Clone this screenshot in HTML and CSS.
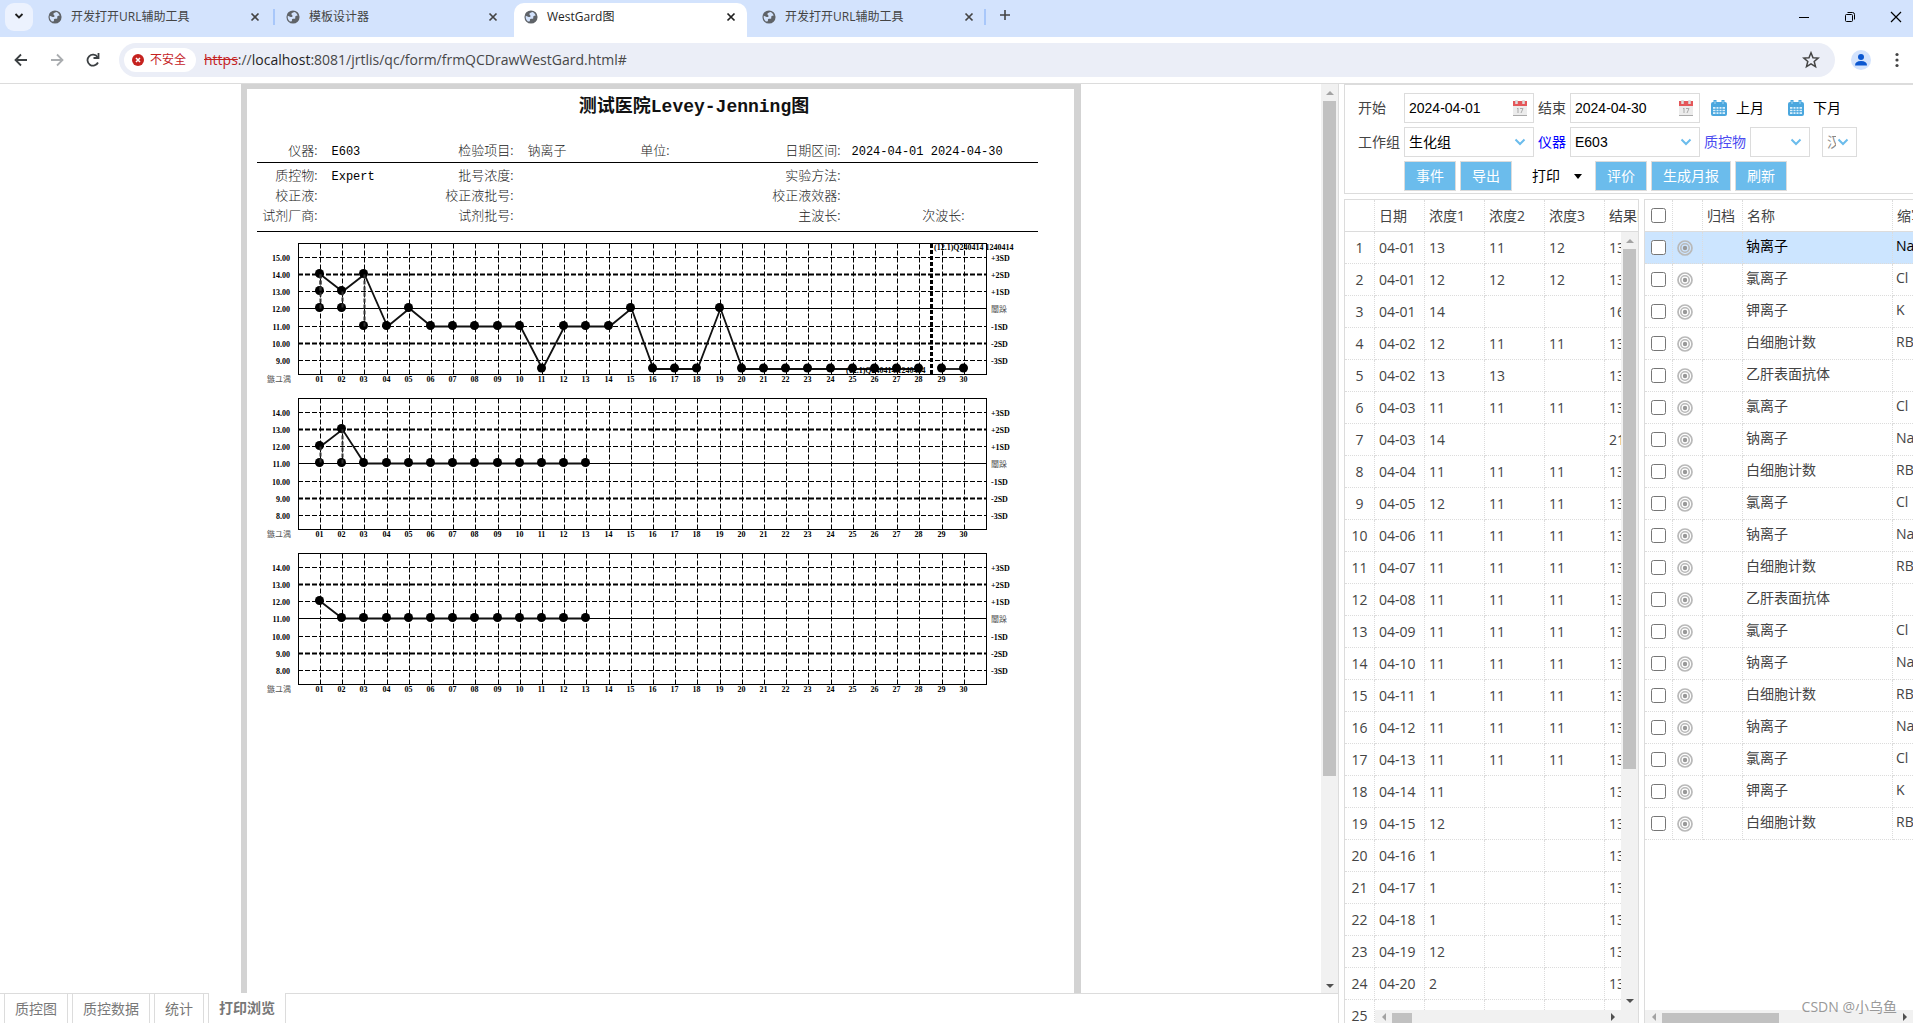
FILE: index.html
```html
<!DOCTYPE html>
<html lang="zh-CN">
<head>
<meta charset="utf-8">
<title>WestGard图</title>
<link rel="stylesheet" href="styles.css">
</head>
<body>
<svg class="defs" aria-hidden="true">
  <symbol id="globe" viewBox="0 0 16 16"><circle cx="8" cy="8" r="7.500" fill="#5f6368"/><path d="M9.500 2.200c-2 .6-3.600 1.300-3.300 2.700.2 1 1.300 1 1.300 2s-1 1.300-2.200 1.100L2 6.500C1.600 9 2.500 11.500 4.500 13l2.300-.2c.1-1.500-.4-2 .6-2.500s2.600.2 3.100-.7c.5-1-.4-1.700.4-2.500s1.500-.6 2.300-.5C13 4.500 11.500 2.800 9.500 2.200z" fill="#d3e3fd"/></symbol>
  <symbol id="cross" viewBox="0 0 10 10"><path d="M1.500 1.500l7 7M8.500 1.500l-7 7" stroke="currentColor" stroke-width="1.700" fill="none"/></symbol>
  <symbol id="bluecal" viewBox="0 0 16 16"><path d="M0 4q0-2 2-2h12q2 0 2 2v10q0 2-2 2H2q-2 0-2-2z" fill="#4ba7de"/><path d="M2 7h12v7H2z" fill="#d9effb"/><path d="M5 7v7M8 7v7M11 7v7M2 9.300h12M2 11.700h12" stroke="#4ba7de"/><path d="M4 0v4M12 0v4" stroke="#4ba7de" stroke-width="3"/><path d="M4 1v3M12 1v3" stroke="#a5d6f3"/></symbol>
  <symbol id="redcal" viewBox="0 0 16 16"><path d="M1 1h14v5H1z" fill="#e4575a"/><path d="M1 6h14v9H1z" fill="#ececec"/><path d="M1 15.500h14" stroke="#aaa"/><path d="M4.500 0v4M11.500 0v4" stroke="#ddd" stroke-width="2.500"/><path d="M6 8v5M5 9l1-1M8 8.500h3l-2 4.500" stroke="#aaa" fill="none"/></symbol>
  <symbol id="target" viewBox="0 0 16 16"><g fill="none" stroke="#b9b9b9"><circle cx="8" cy="8" r="7" stroke-width="1.700"/><circle cx="8" cy="8" r="4.200" stroke-width="1.600"/></g><circle cx="8" cy="8" r="2.200" fill="#999"/></symbol>
</svg>

<header class="browser">
  <nav class="tabstrip" id="tabstrip">
    <button class="tabsearch" aria-label="搜索标签页"><svg width="10" height="10" viewBox="0 0 10 10"><path d="M1.500 3l3.500 3.500L8.500 3" fill="none" stroke="#1f1f1f" stroke-width="1.800"/></svg></button>
    <div class="tab"><svg class="fav"><use href="#globe"/></svg><span>开发打开URL辅助工具</span><button aria-label="关闭"><svg><use href="#cross"/></svg></button></div>
    <div class="tab sep"><svg class="fav"><use href="#globe"/></svg><span>模板设计器</span><button aria-label="关闭"><svg><use href="#cross"/></svg></button></div>
    <div class="tab active"><svg class="fav"><use href="#globe"/></svg><span>WestGard图</span><button aria-label="关闭"><svg><use href="#cross"/></svg></button></div>
    <div class="tab"><svg class="fav"><use href="#globe"/></svg><span>开发打开URL辅助工具</span><button aria-label="关闭"><svg><use href="#cross"/></svg></button></div>
    <button class="newtab" aria-label="新标签页"><svg width="12" height="12"><path d="M6 1v10M1 6h10" stroke="#444" stroke-width="1.600"/></svg></button>
    <div class="wincontrols">
      <button aria-label="最小化"><svg width="12" height="12"><path d="M1 6.500h10" stroke="#000"/></svg></button>
      <button aria-label="还原"><svg width="12" height="12" fill="none" stroke="#000"><rect x="1.500" y="3.500" width="7" height="7" rx="1"/><path d="M3.500 1.500h5q2 0 2 2v5"/></svg></button>
      <button aria-label="关闭窗口"><svg width="12" height="12"><path d="M1 1l10 10M11 1L1 11" stroke="#000" stroke-width="1.200"/></svg></button>
    </div>
  </nav>
  <div class="toolbar">
    <button class="nav" aria-label="后退"><svg width="14" height="14" fill="none" stroke="#3c4043" stroke-width="1.800"><path d="M13 7H2M7 1.500L1.500 7 7 12.500"/></svg></button>
    <button class="nav" aria-label="前进"><svg width="14" height="14" fill="none" stroke="#aaadb0" stroke-width="1.800"><path d="M1 7h11M7 1.500L12.500 7 7 12.500"/></svg></button>
    <button class="nav" aria-label="刷新页面"><svg width="14" height="14" fill="none" stroke="#3c4043" stroke-width="1.800"><path d="M12 9.500A5.500 5.500 0 1 1 11.500 4"/><path d="M12.500 0v5h-5" /></svg></button>
    <div class="omnibox">
      <span class="chip"><svg width="12" height="12"><circle cx="6" cy="6" r="6" fill="#c5221f"/><path d="M4 4l4 4M8 4L4 8" stroke="#fff" stroke-width="1.500"/></svg>不安全</span>
      <span class="url"><s>https</s>://<b>localhost</b>:8081/jrtlis/qc/form/frmQCDrawWestGard.html#</span>
      <button class="star" aria-label="收藏"><svg width="18" height="18" viewBox="0 0 18 18"><path d="M9 1.800l2 4.900 5.200.4-4 3.400 1.300 5.100L9 12.800l-4.500 2.800 1.300-5.100-4-3.400 5.200-.4z" fill="none" stroke="#444" stroke-width="1.500"/></svg></button>
    </div>
    <button class="avatar" aria-label="个人资料"><svg width="20" height="20"><circle cx="10" cy="10" r="10" fill="#d3e3fd"/><circle cx="10" cy="7" r="3" fill="#0b57d0"/><path d="M4 15.500q0-4.500 6-4.500t6 4.500z" fill="#0b57d0"/></svg></button>
    <button class="dots" aria-label="菜单"><svg width="4" height="16" fill="#444"><circle cx="2" cy="2.500" r="1.600"/><circle cx="2" cy="8" r="1.600"/><circle cx="2" cy="13.500" r="1.600"/></svg></button>
  </div>
</header>

<main class="app">
  <section class="left">
    <div class="viewer">
      <div class="stage">
        <article class="paper">
          <h1>测试医院Levey-Jenning图</h1>
          <div class="fields first">
            <span>仪器:</span><i>E603</i><span>检验项目:</span><i class="name">钠离子</i><span>单位:</span><i></i><span>日期区间:</span><i class="wide">2024-04-01 2024-04-30</i>
          </div>
          <div class="fields rest">
            <span>质控物:</span><i>Expert</i><span>批号浓度:</span><i></i><span></span><i></i><span>实验方法:</span><i></i><span></span>
            <span>校正液:</span><i></i><span>校正液批号:</span><i></i><span></span><i></i><span>校正液效器:</span><i></i><span></span>
            <span>试剂厂商:</span><i></i><span>试剂批号:</span><i></i><span></span><i></i><span>主波长:</span><i></i><span>次波长:</span>
          </div>
          <svg class="charts" id="charts" viewBox="247 240 827 460"></svg>
        </article>
      </div>
      <div class="vbar"><i class="up"></i><b></b><i class="down"></i></div>
    </div>
    <nav class="tabs">
      <button>质控图</button><button>质控数据</button><button>统计</button><button class="on">打印浏览</button>
    </nav>
  </section>

  <section class="right">
    <form class="filters">
      <label for="d1">开始</label><span class="box"><input id="d1" value="2024-04-01"><svg><use href="#redcal"/></svg></span>
      <label for="d2">结束</label><span class="box"><input id="d2" value="2024-04-30"><svg><use href="#redcal"/></svg></span>
      <div class="months"><button type="button"><svg><use href="#bluecal"/></svg>上月</button><button type="button"><svg><use href="#bluecal"/></svg>下月</button></div>
      <label for="g">工作组</label><select id="g"><option>生化组</option></select>
      <label for="m" class="blue">仪器</label><select id="m"><option>E603</option></select>
      <div class="more"><label for="q" class="violet">质控物</label><select id="q" class="small"><option></option></select><select class="tiny" aria-label="浓度"><option>汉</option></select></div>
      <div class="actions"><button type="button">事件</button><button type="button">导出</button><button type="button" class="plain">打印<i></i></button><button type="button">评价</button><button type="button">生成月报</button><button type="button">刷新</button></div>
    </form>
    <div class="grids">
      <div class="grid results">
        <div class="clip"><table><colgroup><col class="w30"><col class="w50"><col class="w60"><col class="w60"><col class="w60"><col class="w60"></colgroup>
          <thead><tr><th></th><th>日期</th><th>浓度1</th><th>浓度2</th><th>浓度3</th><th>结果时间</th></tr></thead><tbody id="results"></tbody></table></div>
        <div class="vbar"><i class="up"></i><b></b><i class="down"></i></div>
        <div class="hbar"><i class="lt"></i><b></b><i class="rt"></i></div>
      </div>
      <div class="grid items">
        <div class="clip"><table><colgroup><col class="w28"><col class="w30"><col class="w40"><col class="w150"><col class="w60"></colgroup>
          <thead><tr><th><input type="checkbox" aria-label="全选"></th><th></th><th>归档</th><th>名称</th><th>缩写</th></tr></thead><tbody id="items"></tbody></table></div>
        <div class="hbar"><i class="lt"></i><b></b><i class="rt"></i></div>
      </div>
    </div>
  </section>
  <div class="mark">CSDN @小乌鱼</div>
</main>
<script src="app.js"></script>
</body>
</html>
```
FILE: styles.css
```css
* { box-sizing: border-box; }
html, body { height: 100%; }
body { margin: 0; display: flex; flex-direction: column; overflow: hidden; background: #fff; color: #444; font: 14px/20px "Open Sans", "Noto Sans CJK SC", sans-serif; }
button { border: 0; padding: 0; background: none; font: inherit; color: inherit; }
i { font-style: normal; }
.defs { position: absolute; width: 0; height: 0; }

.tabstrip { display: flex; height: 37px; padding: 3px 0 0 5px; background: #d3e3fd; font-size: 12px; }
.tabsearch { width: 28px; height: 28px; margin-right: 6px; border-radius: 9px; background: #ecf2fe; }
.tab { position: relative; display: flex; align-items: center; width: 238px; height: 28px; padding: 0 17px 0 9px; }
.tab .fav { width: 14px; height: 14px; margin-right: 9px; }
.tab span { flex: 1; }
.tab button { width: 10px; height: 10px; line-height: 0; }
.tab button svg { width: 10px; height: 10px; }
.tab.sep::before, .newtab::before { content: ""; position: absolute; left: -4px; top: 6px; width: 2px; height: 16px; background: #a8c7fa; }
.tab.active { height: 34px; padding-bottom: 6px; color: #1f1f1f; }
.tab.active::before { content: ""; position: absolute; inset: 0 6px 0 -1px; background: #fff; border-radius: 10px 10px 0 0; }
.tab.active > * { position: relative; }
.newtab { position: relative; width: 34px; height: 28px; margin-left: -3px; }
.wincontrols { display: flex; gap: 34px; margin: 8px 11px 0 auto; height: 12px; }
.wincontrols button { width: 12px; height: 12px; line-height: 0; }
.toolbar { display: flex; align-items: center; height: 47px; padding: 0 14px; background: #fff; border-bottom: 1px solid #dcdcdc; }
.nav { width: 14px; height: 14px; margin-right: 22px; line-height: 0; }
.omnibox { flex: 1; display: flex; align-items: center; height: 34px; border-radius: 17px; background: #ebeef7; padding: 0 15px 0 5px; margin-left: -3px; }
.chip { display: flex; align-items: center; gap: 6px; width: 72px; height: 24px; padding-left: 8px; border-radius: 12px; background: #fff; color: #c5221f; font-size: 12px; }
.url { flex: 1; margin-left: 8px; color: #474747; font-size: 14px; }
.url s { color: #c5221f; }
.url b { font-weight: 400; color: #1f1f1f; }
.star { width: 18px; height: 18px; line-height: 0; }
.avatar { width: 20px; height: 20px; margin: 0 24px 0 16px; line-height: 0; }
.dots { width: 4px; height: 16px; line-height: 0; }

.app { position: relative; flex: 1; min-height: 0; display: flex; gap: 5px; }
.left { flex: 1; display: flex; flex-direction: column; min-width: 0; border-right: 1px solid #dcdcdc; }
.viewer { flex: 1; min-height: 0; display: flex; }
.stage { flex: 1; min-width: 0; display: flex; justify-content: center; overflow: hidden; }
.paper { width: 840px; border: solid #d3d3d3; border-width: 5px 7px 0 6px; color: #333; font: 13px/20px "Liberation Mono", "Noto Sans CJK SC", monospace; overflow: hidden; }
.paper h1 { margin: 5px 0 20px; font-size: 18px; line-height: 26px; font-weight: 700; color: #111; text-align: center; padding-left: 68px; }
.fields { display: grid; grid-template-columns: 61px 121px 75px 108px 48px 96px 75px 80px 44px; align-items: baseline; width: 781px; margin-left: 10px; white-space: nowrap; border-bottom: 1px solid #000; }
.fields span { text-align: right; font-family: "Noto Sans CJK SC", sans-serif; font-weight: 300; color: #222; }
.fields i { padding-left: 14px; font-size: 12px; color: #000; }
.fields .name { font-size: 13px; font-family: "Noto Sans CJK SC", sans-serif; font-weight: 300; color: #222; }
.fields .wide { grid-column: span 2; padding-left: 11px; }
.first { height: 23px; }
.rest { height: 69px; padding-top: 2px; grid-auto-rows: 20px; align-content: start; }
.charts { display: block; width: 827px; height: 460px; margin-top: 8px; font: bold 8px "Liberation Serif", "Noto Sans CJK SC", serif; }
.charts .faint { font-weight: 400; fill: #555; }

.vbar { width: 17px; background: #f1f1f1; display: flex; flex-direction: column; align-items: center; }
.vbar b { width: 13px; background: #c1c1c1; }
.vbar i, .hbar i { border: 4px solid transparent; flex: none; }
.vbar .up { border-bottom-color: #a3a3a3; margin: 3px 0 6px; }
.vbar .down { border-top-color: #505050; margin: auto 0 1px; }
.viewer .vbar b { height: 74.300%; }
.hbar { height: 13px; background: #f1f1f1; display: flex; align-items: center; }
.hbar b { height: 10px; align-self: flex-end; background: #c1c1c1; }
.hbar .lt { border-right-color: #a3a3a3; margin: 0 6px 0 3px; }
.hbar .rt { border-left-color: #505050; margin: 0 2px 0 auto; }

.tabs { display: flex; height: 30px; gap: 4px; padding-left: 4px; border-top: 1px solid #dcdcdc; color: #777; }
.tabs button { padding: 0 10px; border: solid #dcdcdc; border-width: 0 1px; }
.tabs .on { margin-top: -1px; background: #fff; font-weight: 700; }

.right { width: 569px; flex: none; display: flex; flex-direction: column; }
.filters { height: 110px; padding: 8px 0 2px 13px; border: solid #dcdcdc; border-width: 1px 0 1px 1px; display: grid; grid-template-columns: 42px 130px 28px 130px 1fr; grid-template-rows: 30px 30px 30px; gap: 4px; align-items: center; white-space: nowrap; }
.box { display: flex; align-items: center; height: 30px; border: 1px solid #dcdcdc; padding: 0 5px 0 4px; }
.box input { flex: 1; min-width: 0; width: 0; border: 0; padding: 0; background: none; font: 14px "Liberation Sans", sans-serif; color: #000; }
.box svg { width: 16px; height: 16px; }
select { appearance: none; width: 100%; height: 30px; border: 1px solid #dcdcdc; border-radius: 0; padding: 0 20px 0 4px; color: #000; font: 14px "Liberation Sans", "Noto Sans CJK SC", sans-serif; background: #fff url("data:image/svg+xml,%3Csvg xmlns='http://www.w3.org/2000/svg' width='12' height='8'%3E%3Cpath d='M1.500 1.500L6 6l4.500-4.500' fill='none' stroke='%236bbcec' stroke-width='2'/%3E%3C/svg%3E") no-repeat right 7px center; }
.blue { color: #00f; }
.violet { color: #4a4af0; }
.months { display: flex; gap: 24px; padding-left: 7px; color: #000; }
.months button { display: flex; align-items: center; gap: 9px; }
.months svg { width: 16px; height: 16px; }
.more { display: flex; align-items: center; gap: 4px; }
.more .small { width: 60px; }
.more .tiny { width: 35px; margin-left: 8px; color: #888; }
.actions { grid-column: 2 / -1; display: flex; gap: 4px; }
.actions button { height: 30px; padding: 0 11px; border: 1px solid #dcdcdc; background: #6bbcec; color: #fff; }
.actions .plain { display: flex; align-items: center; gap: 14px; width: 75px; border: 0; background: none; color: #000; padding: 0 0 0 16px; }
.plain i { border: 4px solid transparent; border-top: 5px solid #000; border-bottom: 0; }

.grids { flex: 1; min-height: 0; display: flex; gap: 5px; margin-top: 5px; }
.grid { position: relative; overflow: hidden; border: solid #dcdcdc; border-width: 1px 0 0 1px; }
.results { width: 295px; border-right-width: 1px; }
.items { flex: 1; }
.clip { height: 100%; overflow: hidden; }
table { table-layout: fixed; border-collapse: separate; border-spacing: 0; }
.results table { width: 320px; }
.items table { width: 308px; }
th, td { height: 32px; padding: 0 0 0 4px; border: dotted #dcdcdc; border-width: 0 1px 1px 0; text-align: left; font-weight: 400; white-space: nowrap; overflow: hidden; }
th { border-bottom-style: solid; }
.results td:first-child { padding: 0; text-align: center; }
.w28 { width: 28px; } .w30 { width: 30px; } .w40 { width: 40px; } .w50 { width: 50px; } .w60 { width: 60px; } .w150 { width: 150px; }
td input, th input { display: block; width: 15px; height: 15px; margin: 0 0 0 2px; }
td svg { display: block; width: 16px; height: 16px; }
.items td:nth-child(n+4) { padding: 0 0 4px 3px; }
.picked td { background: #cce5ff; color: #000; }
.grid .vbar { position: absolute; right: 0; top: 32px; bottom: 0; padding-bottom: 15px; }
.results .vbar b { height: 67%; }
.grid .hbar { position: absolute; left: 0; right: 0; bottom: 0; }
.results .hbar { left: 30px; right: 17px; }
.results .hbar b { width: 20px; }
.items .hbar b { width: 117px; }
.mark { position: absolute; right: 16px; bottom: 6px; color: #999; }
```
FILE: app.js
```js
const days = [...Array(30).keys()].map(n => String(n + 1).padStart(2, "0"));

// One control chart: frame, limit lines, day lines, points and their labels.
function chart(top, high, line, extra) {
  const x = d => 320.5 + Math.round((d - 1) * 22.2);
  const levels = [14, 31, 48, 65, 83, 100, 117].map(v => top + v);
  const y = v => v < high - 6 ? top + 125.5 : levels[high - v];
  let s = `<rect x="298.5" y="${top}" width="688" height="131" fill="none" stroke="#000"/>`;
  const names = ["+3SD", "+2SD", "+1SD", "闈跺", "-1SD", "-2SD", "-3SD"];
  levels.forEach((l, i) => {
    const bold = i === 1 || i === 5;
    s += `<path d="M298 ${l}H986" stroke="#000" stroke-width="${bold ? 2 : 1}"${i === 3 ? "" : ' stroke-dasharray="5 2"'}/>`;
    s += `<text x="290" y="${l + 3}" text-anchor="end">${high - i}.00</text>`;
    s += `<text x="991" y="${l + 3}"${i === 3 ? ' class="faint"' : ""}>${names[i]}</text>`;
  });
  days.forEach((d, i) => {
    s += `<path d="M${x(i + 1)} ${top}v131" stroke="#000" stroke-dasharray="5 2"/>`;
    s += `<text x="${x(i + 1) - 1}" y="${top + 138}" text-anchor="middle">${d}</text>`;
  });
  s += `<text x="267" y="${top + 138}" class="faint">鏃ユ湡</text>`;
  extra.lines.forEach(l => {
    s += `<polyline fill="none" stroke="#111" stroke-width="1.800" points="${l.map(([d, v]) => x(d) + "," + y(v)).join(" ")}"/>`;
  });
  extra.lines.flat().concat(extra.repeats).forEach(([d, v]) => {
    s += `<circle cx="${x(d) - 1}" cy="${y(v) - 1}" r="4.500"/>`;
  });
  extra.repeats.forEach(([d, v, from]) => {
    s += `<path d="M${x(d)} ${y(from)}V${y(v)}" stroke="#333" stroke-width="2" stroke-dasharray="4 2"/>`;
  });
  return s;
}

const low = 8;
const run = (a, b, v) => days.slice(a - 1, b).map(d => [+d, v]);
let svg = chart(243.5, 15, 12, {
  lines: [
    [[1, 14], [2, 13], [3, 14], [4, 11], [5, 12], ...run(6, 10, 11), [11, low], ...run(12, 14, 11), [15, 12], ...run(16, 18, low), [19, 12], ...run(20, 28, low)],
    run(29, 30, low)
  ],
  repeats: [[1, 13, 14], [1, 12, 14], [2, 12, 13], [3, 11, 14]]
});
svg += `<path d="M931.5 244v131" stroke="#000" stroke-width="3" stroke-dasharray="4 2"/>`;
svg += `<text x="934" y="250">(12.1)Q240414 1240414</text><text x="846" y="373">(12.1)Q240414 1240414</text>`;
svg += chart(398.5, 14, 11, { lines: [[[1, 12], [2, 13], ...run(3, 13, 11)]], repeats: [[1, 11, 12], [2, 11, 13]] });
svg += chart(553.5, 14, 11, { lines: [[[1, 12], ...run(2, 13, 11)]], repeats: [] });
document.getElementById("charts").innerHTML = svg;

const rows = [
  ["04-01", 13, 11, 12, 13], ["04-01", 12, 12, 12, 13], ["04-01", 14, "", "", 16], ["04-02", 12, 11, 11, 13],
  ["04-02", 13, 13, "", 13], ["04-03", 11, 11, 11, 13], ["04-03", 14, "", "", 21], ["04-04", 11, 11, 11, 13],
  ["04-05", 12, 11, 11, 13], ["04-06", 11, 11, 11, 13], ["04-07", 11, 11, 11, 13], ["04-08", 11, 11, 11, 13],
  ["04-09", 11, 11, 11, 13], ["04-10", 11, 11, 11, 13], ["04-11", 1, 11, 11, 13], ["04-12", 11, 11, 11, 13],
  ["04-13", 11, 11, 11, 13], ["04-14", 11, "", "", 13], ["04-15", 12, "", "", 13], ["04-16", 1, "", "", 13],
  ["04-17", 1, "", "", 13], ["04-18", 1, "", "", 13], ["04-19", 12, "", "", 13], ["04-20", 2, "", "", 13], ["", "", "", "", ""]
];
document.getElementById("results").innerHTML = rows
  .map((r, i) => `<tr><td>${i + 1}</td>${r.map(c => `<td>${c}</td>`).join("")}</tr>`).join("");

const codes = { 钠离子: "Na", 氯离子: "Cl", 钾离子: "K", 白细胞计数: "RBC", 乙肝表面抗体: "" };
const items = "钠离子 氯离子 钾离子 白细胞计数 乙肝表面抗体 氯离子 钠离子 白细胞计数 氯离子 钠离子 白细胞计数 乙肝表面抗体 氯离子 钠离子 白细胞计数 钠离子 氯离子 钾离子 白细胞计数".split(" ");
document.getElementById("items").innerHTML = items
  .map((n, i) => `<tr${i ? "" : ' class="picked"'}><td><input type="checkbox" aria-label="${n}"></td><td><svg><use href="#target"/></svg></td><td></td><td>${n}</td><td>${codes[n]}</td></tr>`).join("");
```
